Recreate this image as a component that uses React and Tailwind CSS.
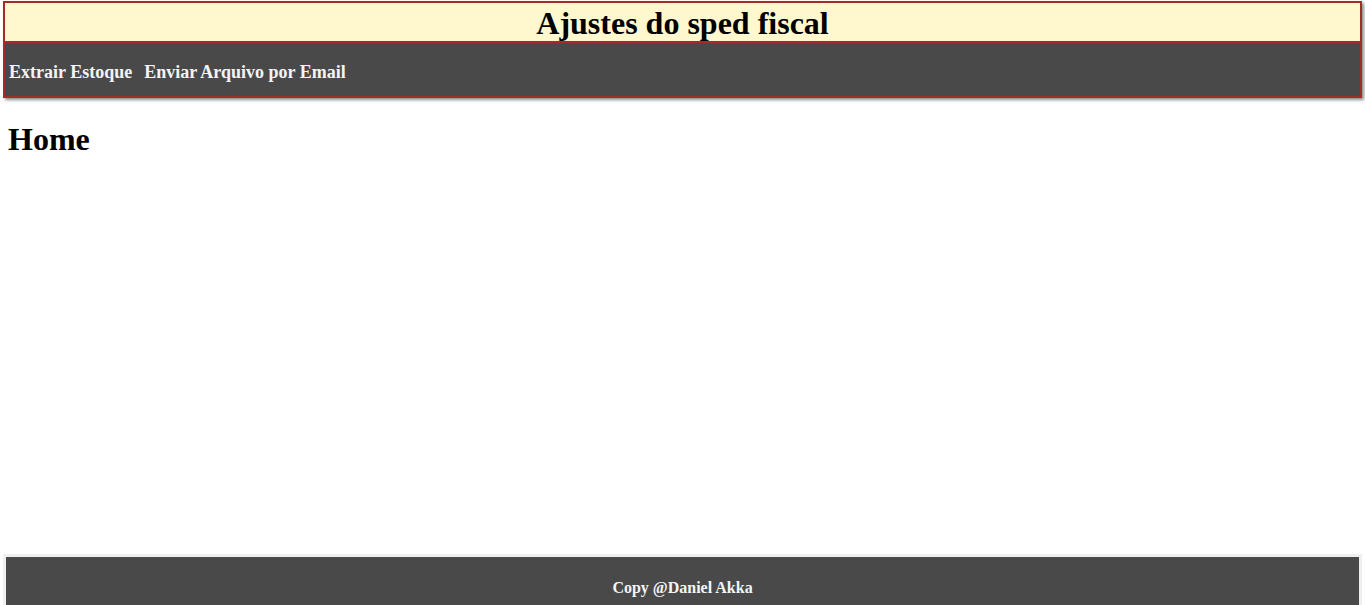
import React from 'react';

const serif = { fontFamily: '"Liberation Serif", "Times New Roman", serif' };

const App = () => {
  return (
    <div className="h-screen overflow-hidden flex flex-col bg-white text-black" style={serif}>
      {/* Header */}
      <header className="mx-[3px] mt-px border-2 border-[#a52a2a] shadow-[2px_2px_3px_#8a8a8a] shrink-0">
        <div className="h-10 pt-[2px] bg-[#fff8cf] border-b-2 border-[#a52a2a] flex items-center justify-center">
          <h1 className="text-[32px] font-bold leading-none">Ajustes do sped fiscal</h1>
        </div>
        <nav className="h-[53px] bg-[#494949] flex items-start gap-[12px] pl-1 pt-[16px]">
          <a href="#" className="text-[18px] font-bold text-[#f4f4f4]">Extrair Estoque</a>
          <a href="#" className="text-[18px] font-bold text-[#f4f4f4]">Enviar Arquivo por Email</a>
        </nav>
      </header>

      {/* Content */}
      <main className="flex-1 px-2">
        <h2 className="mt-[17px] text-[32px] font-bold">Home</h2>
      </main>

      {/* Footer */}
      <footer className="shrink-0 mx-[3px] h-[64px] -mb-[13px] border-[3px] border-[#efefef] bg-[#494949] pt-[19px] text-center">
        <p className="text-[16px] font-bold text-[#f4f4f4]">Copy @Daniel Akka</p>
      </footer>
    </div>
  );
};

export default App;
